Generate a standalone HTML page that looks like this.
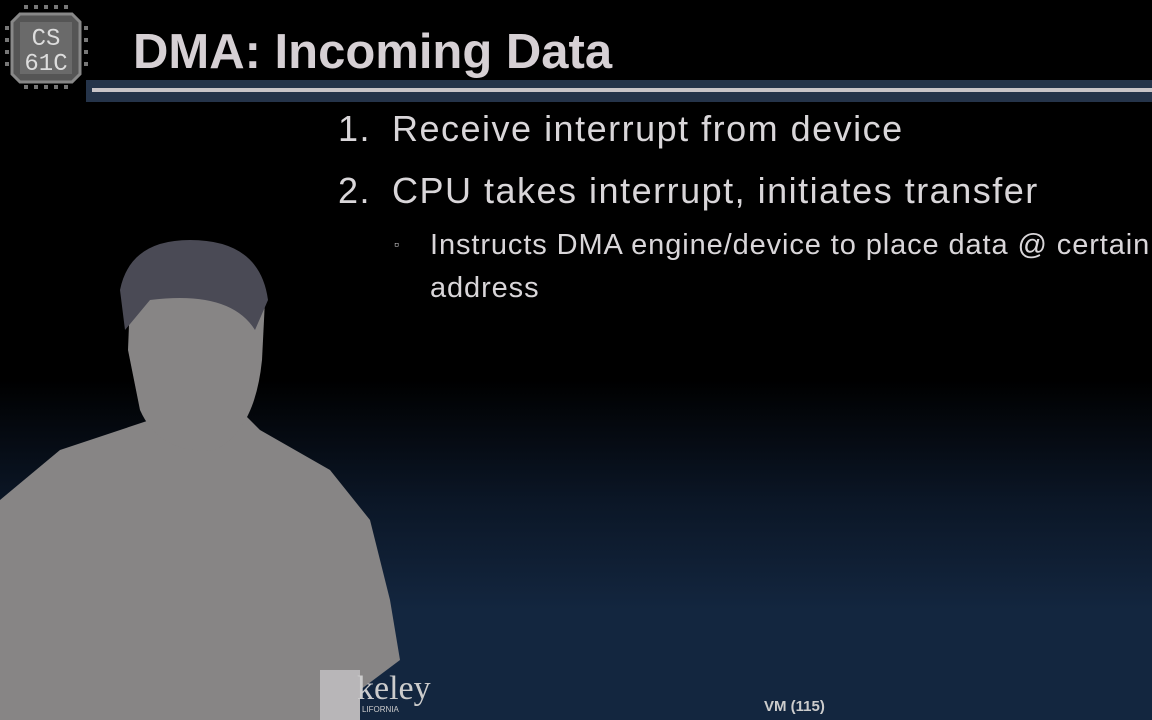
<!DOCTYPE html>
<html><head><style>
body{margin:0;width:1152px;height:720px;overflow:hidden;position:relative;
background:linear-gradient(to bottom,#000 0px,#000 380px,#0b1626 500px,#13263f 610px,#13263f 720px);
font-family:"Liberation Sans",sans-serif;color:#d9d6d9}
.t{position:absolute;white-space:nowrap}
</style></head><body>
<svg width="1152" height="720" style="position:absolute;left:0;top:0">
<g fill="#777">
<rect x="24" y="5" width="4" height="4"/><rect x="34" y="5" width="4" height="4"/><rect x="44" y="5" width="4" height="4"/><rect x="54" y="5" width="4" height="4"/><rect x="64" y="5" width="4" height="4"/>
<rect x="24" y="85" width="4" height="4"/><rect x="34" y="85" width="4" height="4"/><rect x="44" y="85" width="4" height="4"/><rect x="54" y="85" width="4" height="4"/><rect x="64" y="85" width="4" height="4"/>
<rect x="5" y="26" width="4" height="4"/><rect x="5" y="38" width="4" height="4"/><rect x="5" y="50" width="4" height="4"/><rect x="5" y="62" width="4" height="4"/>
<rect x="84" y="26" width="4" height="4"/><rect x="84" y="38" width="4" height="4"/><rect x="84" y="50" width="4" height="4"/><rect x="84" y="62" width="4" height="4"/>
</g>
<path d="M20 14 H72 L80 22 V74 L72 82 H20 L12 74 V22 Z" fill="#555" stroke="#888" stroke-width="3"/>
<rect x="20" y="22" width="52" height="52" fill="#6a6a6a"/>
<text x="46" y="45" text-anchor="middle" font-family="Liberation Mono" font-size="24" fill="#ddd">CS</text>
<text x="46" y="70" text-anchor="middle" font-family="Liberation Mono" font-size="24" fill="#ddd">61C</text>
<rect x="86" y="80" width="1066" height="22" fill="#25344a"/>
<rect x="92" y="88" width="1060" height="4" fill="#c8c4c8"/>
<g fill="#878585">
<path d="M0 500 L60 450 L150 420 L170 400 L240 410 L260 430 L330 470 L370 520 L390 600 L400 660 L360 690 L340 720 L0 720 Z"/>
<path d="M130 300 Q140 250 190 245 Q250 245 265 300 L262 360 Q255 430 215 450 Q160 455 140 410 L128 350 Z"/>
</g>
<path d="M120 290 Q130 240 190 240 Q260 240 268 300 L255 330 Q230 290 150 300 L125 330 Z" fill="#4a4a55"/>
<rect x="320" y="670" width="40" height="50" fill="#b8b6b8"/>
</svg>
<div class="t" style="left:133px;top:24px;font-size:49px;font-weight:bold;color:#d6d0d4;letter-spacing:0px">DMA: Incoming Data</div>
<div class="t" style="left:338px;top:108px;font-size:36px;letter-spacing:1.5px">1.</div>
<div class="t" style="left:392px;top:108px;font-size:36px;letter-spacing:1.5px">Receive interrupt from device</div>
<div class="t" style="left:338px;top:170px;font-size:36px;letter-spacing:1.5px">2.</div>
<div class="t" style="left:392px;top:170px;font-size:36px;letter-spacing:1.5px">CPU takes interrupt, initiates transfer</div>
<div class="t" style="left:394px;top:236px;font-size:14px">▫</div>
<div class="t" style="left:430px;top:229px;font-size:29px;letter-spacing:0.9px">Instructs DMA engine/device to place data @ certain</div>
<div class="t" style="left:430px;top:272px;font-size:29px;letter-spacing:0.9px">address</div>
<div class="t" style="left:357px;top:670px;font-size:34px;font-family:'Liberation Serif',serif;color:#ccc">keley</div>
<div class="t" style="left:362px;top:705px;font-size:8px;color:#ccc">LIFORNIA</div>
<div class="t" style="left:764px;top:698px;font-size:15px;font-weight:bold;color:#ccc">VM (115)</div>
</body></html>
